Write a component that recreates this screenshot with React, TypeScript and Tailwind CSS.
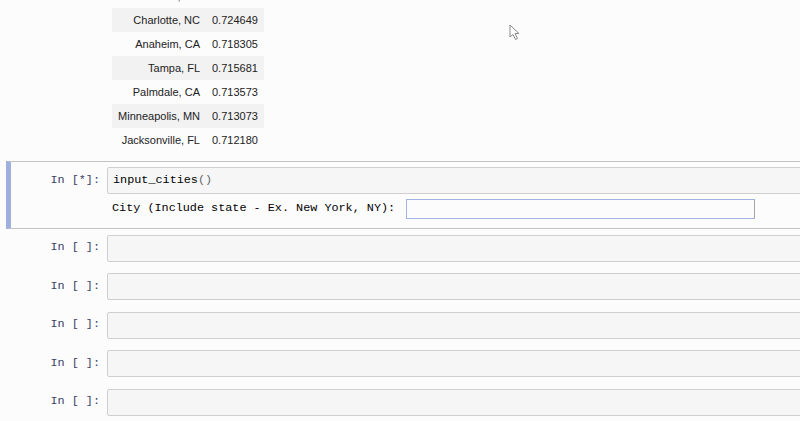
const ROWS: Array<[string, string]> = [
  ['Akron, OH', '0.726421'],
  ['Charlotte, NC', '0.724649'],
  ['Anaheim, CA', '0.718305'],
  ['Tampa, FL', '0.715681'],
  ['Palmdale, CA', '0.713573'],
  ['Minneapolis, MN', '0.713073'],
  ['Jacksonville, FL', '0.712180'],
]

const MONO = "font-['Liberation_Mono','DejaVu_Sans_Mono',monospace] text-[11.8px]"

function Prompt({ label }: { label: string }) {
  return (
    <div className={`w-[96px] shrink-0 pr-[7px] text-right text-[#3c4266] ${MONO}`}>
      {label}
    </div>
  )
}

function CodeBox({ children }: { children?: React.ReactNode }) {
  return (
    <div
      className={`flex h-[27px] w-[720px] shrink-0 items-center rounded-[2px] border border-[#cfcfd2] bg-[#f6f6f7] pl-[5px] text-black ${MONO}`}
    >
      {children}
    </div>
  )
}

function Cursor() {
  return (
    <svg className="absolute left-[509px] top-[24px]" width="12" height="17" viewBox="0 0 12 17">
      <path
        d="M1 1 L1 13 L4 10.5 L6.5 15.5 L8.5 14.5 L6 9.5 L10 9.5 Z"
        fill="#fff"
        stroke="#8a8a8a"
        strokeWidth="1"
        strokeLinejoin="round"
      />
    </svg>
  )
}

export default function App() {
  return (
    <div className="relative h-[421px] w-[800px] overflow-hidden bg-[#fdfcfd]">
      <Cursor />

      {/* previous output */}
      <table className="-mt-4 ml-[112px] border-collapse font-['Liberation_Sans',Arial,sans-serif] text-[11px] text-[#222]">
        <tbody>
          {ROWS.map(([city, score], i) => (
            <tr key={city} className={`h-6 ${i % 2 === 1 ? 'bg-[#f2f2f3]' : ''}`}>
              <td className="w-[94px] pr-[6px] text-right whitespace-nowrap">{city}</td>
              <td className="w-[58px] pl-[6px] text-left">{score}</td>
            </tr>
          ))}
        </tbody>
      </table>

      {/* running cell */}
      <div className="mt-[9px] ml-[6px] w-[820px] border-y border-l-[5px] border-y-[#c4c4c6] border-l-[#9fb0df] pt-[5px] pb-[5px]">
        <div className="flex items-center">
          <Prompt label="In [*]:" />
          <CodeBox>
            input_cities<span className="text-[#666]">()</span>
          </CodeBox>
        </div>
        <div className="flex h-[29px] items-center pl-[101px]">
          <span className={`text-black ${MONO}`}>City (Include state - Ex. New York, NY):</span>
          <div className="ml-[11px] h-[20px] w-[349px] border border-[#a3b2de] border-r-[#a5a5a8]" />
        </div>
      </div>

      {/* empty cells */}
      {[0, 1, 2, 3, 4].map((n) => (
        <div key={n} className="flex h-[38.5px] items-center pl-[11px]">
          <Prompt label="In [ ]:" />
          <CodeBox />
        </div>
      ))}
    </div>
  )
}
